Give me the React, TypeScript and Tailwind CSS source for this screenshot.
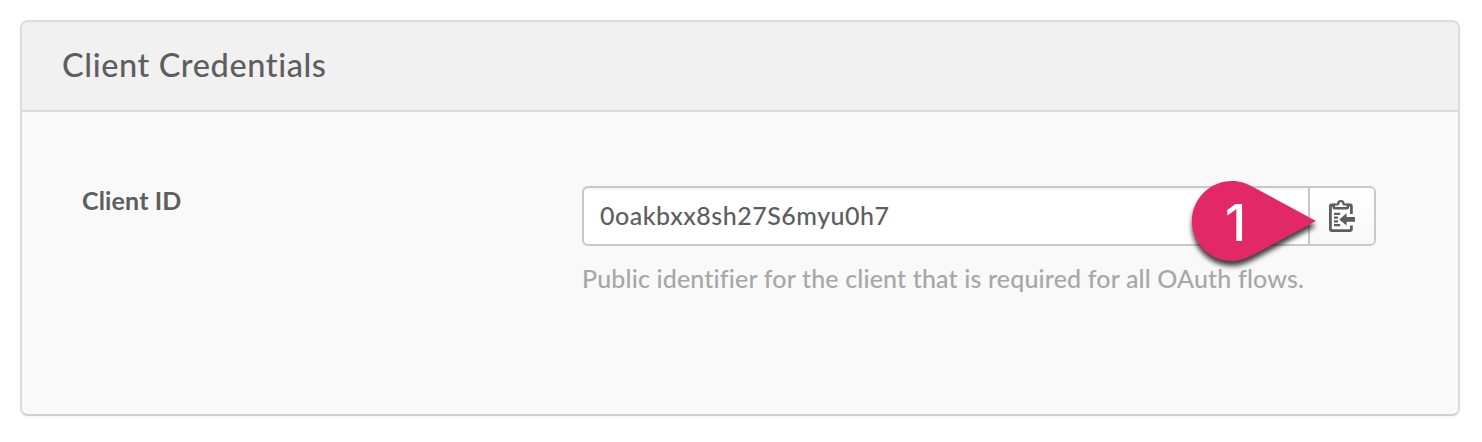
function ClipboardIcon() {
  return (
    <svg width="28" height="34" viewBox="0 0 28 34" fill="none" aria-hidden="true" className="relative top-px">
      <path
        d="M5 5H3.4Q2.4 5 2.4 6V29.6Q2.4 30.6 3.4 30.6H22.4Q23.4 30.6 23.4 29.6V25.4M23.4 14V6Q23.4 5 22.4 5H20.4"
        stroke="#5e5e5e"
        strokeWidth="2.8"
      />
      <path
        d="M5.8 3.6V7.2Q5.8 8.2 6.8 8.2H18.8Q19.8 8.2 19.8 7.2V3.6"
        stroke="#5e5e5e"
        strokeWidth="2.6"
      />
      <path d="M9 4.6V3.6Q9 0 12.8 0Q16.6 0 16.6 3.6V4.6H14.2V3.6Q14.2 2.1 12.8 2.1Q11.4 2.1 11.4 3.6V4.6Z" fill="#5e5e5e" />
      <path d="M5.8 3.4H10.6V5.4H5.8ZM15 3.4H19.8V5.4H15Z" fill="#5e5e5e" />
      <path d="M6 13.8H12.2M6 17.6H10M6 21.4H10M6 25.2H12.2" stroke="#5e5e5e" strokeWidth="2.2" />
      <path d="M11.2 19.4L18.6 13.2V17H27V21.8H18.6V25.6Z" fill="#5e5e5e" />
    </svg>
  );
}

function StepMarker() {
  return (
    <div className="pointer-events-none absolute -top-[15px] left-[600px] h-[100px] w-[144px]">
      <svg width="144" height="100" viewBox="0 0 144 100" className="block drop-shadow-[0_5px_2.5px_rgba(0,0,0,0.75)]">
        <path
          d="M48 8C25.9 8 8 25.9 8 48C8 70.1 25.9 88 48 88C56 88 63 85 71 81L132 48L71 15C63 10.5 56 8 48 8Z"
          fill="#e32868"
        />
      </svg>
      <span className="absolute left-[41px] top-[25px] font-['Inter',sans-serif] text-[51px] font-medium leading-[50px] text-white">
        1
      </span>
    </div>
  );
}

export default function App() {
  return (
    <main className="h-[442px] w-[1482px] bg-white p-5 font-['Lato','Open_Sans',sans-serif] text-[#5e5e5e]">
      <section className="flex h-[396px] w-[1440px] flex-col overflow-hidden rounded-lg border-2 border-[#dcdcdc] border-b-[#d0d0d0] bg-[#f9f9f9] shadow-[0_2px_2px_rgba(0,0,0,0.04)]">
        <header className="flex h-[90px] shrink-0 items-center border-b-2 border-[#dcdcdc] bg-[#f1f1f1] px-10 pb-0.5">
          <h2 className="whitespace-nowrap text-[32.5px] font-medium leading-10 tracking-[0.6px]">Client Credentials</h2>
        </header>
        <div className="flex pl-[60px] pt-[74px]">
          <label htmlFor="client-id" className="-mt-0.5 w-[500px] shrink-0 text-[25px] font-bold leading-8 tracking-[0.15px]">
            Client ID
          </label>
          <div className="w-[794px]">
            <div className="relative flex h-[60px] rounded-md border-2 border-[#c8c8c8] bg-white">
              <div
                id="client-id"
                className="flex w-[724px] items-center rounded-l pb-0.5 pl-4 text-[25px] font-medium leading-8 tracking-[0.5px] shadow-[inset_0_2px_2px_rgba(0,0,0,0.04)]"
              >
                <span>0oakbxx8sh27S6myu0h7</span>
              </div>
              <button
                type="button"
                aria-label="Copy to clipboard"
                className="flex flex-1 items-center justify-center rounded-r border-l-2 border-[#c8c8c8] bg-linear-to-b from-white to-[#f8f8f8]"
              >
                <ClipboardIcon />
              </button>
              <StepMarker />
            </div>
            <p className="mt-4 whitespace-nowrap text-[25px] font-medium leading-8 tracking-[0.16px] text-[#a7a7a7]">
              Public identifier for the client that is required for all OAuth flows.
            </p>
          </div>
        </div>
      </section>
    </main>
  );
}
